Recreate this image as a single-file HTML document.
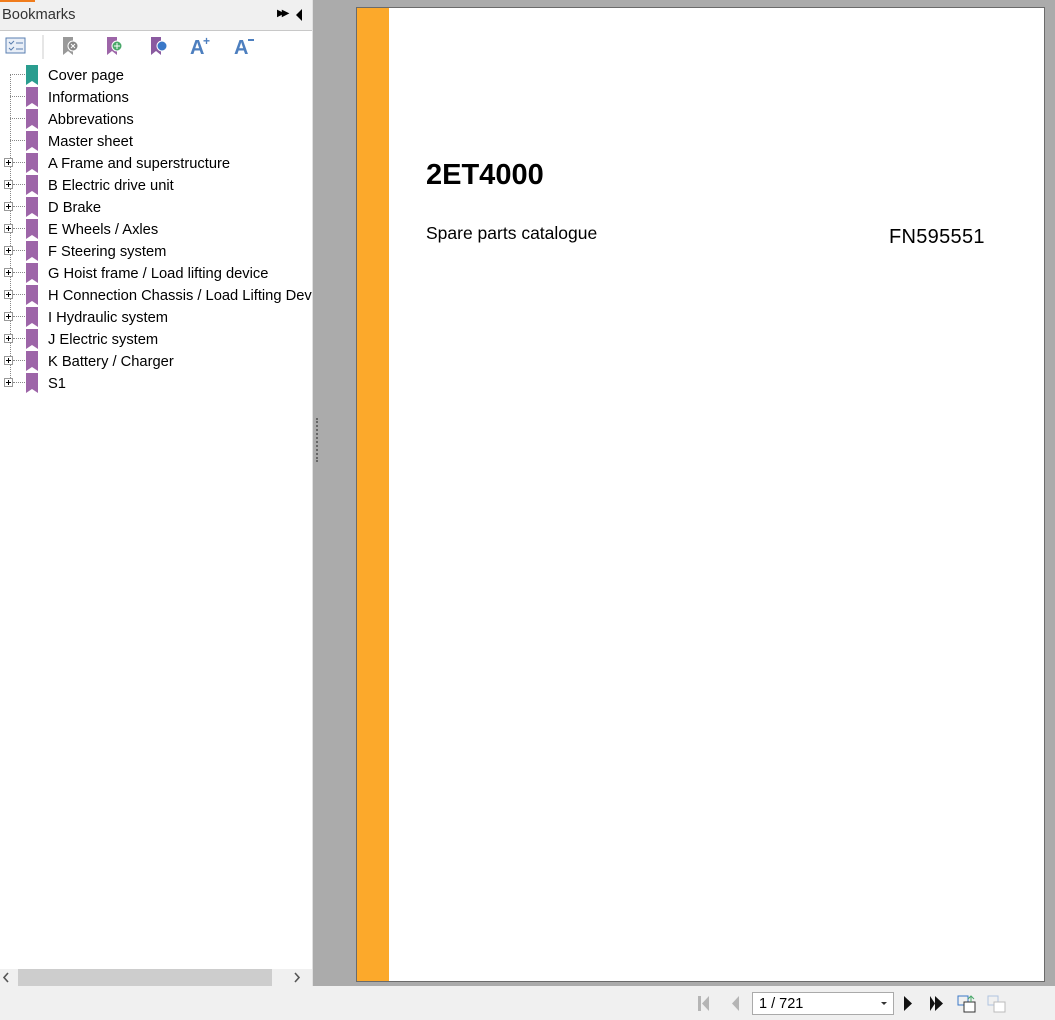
<!DOCTYPE html>
<html><head><meta charset="utf-8"><style>
*{margin:0;padding:0;box-sizing:border-box}
body{width:1055px;height:1020px;background:#f0f0f0;position:relative;overflow:hidden;font-family:"Liberation Sans",Tahoma,sans-serif;}
.abs{position:absolute}
#left{left:0;top:0;width:312px;height:986px;background:#fff}
#hdr{left:0;top:0;width:312px;height:31px;background:#f0f0f0;border-bottom:1px solid #c8c8c8}
#gray{left:313px;top:0;width:742px;height:986px;background:#ababab}
#page{left:356px;top:7px;width:689px;height:975px;background:#fff;border:1px solid #6b6b6b}
.row{position:absolute;left:0;height:22px;width:312px;font-size:14.7px;color:#000;line-height:22px}
.row span{position:absolute;left:48px;top:1px;white-space:nowrap}
.bm{position:absolute;left:26px;top:1px;width:12px;height:20px}
.plus{position:absolute;left:4px;top:6px;width:9px;height:9px;border:1px solid #999;background:#fff}
.plus:before{content:"";position:absolute;left:1px;top:3px;width:5px;height:1px;background:#000}
.plus:after{content:"";position:absolute;left:3px;top:1px;width:1px;height:5px;background:#000}
.dh{position:absolute;left:13px;top:10px;width:12px;border-top:1px dotted #888}
.dh0{left:10px;width:15px}
</style></head><body>
<div class="abs" id="left"></div>
<div class="abs" id="hdr"></div>
<div class="abs" style="left:0;top:0;width:35px;height:2px;background:#f07c1c"></div>
<div class="abs" style="left:2px;top:7px;font-size:14.7px;color:#333">Bookmarks</div>
<div class="abs" style="left:277px;top:8px;font-size:10px;color:#000;letter-spacing:-3px">▶▶</div>
<div class="abs" style="left:296px;top:9px;width:0;height:0;border-top:6px solid transparent;border-bottom:6px solid transparent;border-right:6px solid #000"></div>
<!-- toolbar -->
<svg class="abs" style="left:0;top:33px" width="270" height="28">
<rect x="6" y="5" width="19" height="15" fill="#e8eef7" stroke="#5a7fb0"/>
<path d="M9 9l2 2 3-3M9 15l2 2 3-3" stroke="#5a7fb0" fill="none"/><path d="M16 10h7M16 16h7" stroke="#5a7fb0"/>
<line x1="43" y1="2" x2="43" y2="26" stroke="#ccc"/>
<path d="M63 4h10v18l-5-4-5 4z" fill="#999"/><circle cx="73" cy="13" r="5" fill="#888" stroke="#fff"/><path d="M71 11l4 4M75 11l-4 4" stroke="#fff"/>
<path d="M107 4h10v18l-5-4-5 4z" fill="#9d65a8"/><circle cx="117" cy="13" r="5" fill="#4aa86a" stroke="#fff"/><path d="M114 13h6M117 10v6" stroke="#fff"/>
<path d="M151 4h10v18l-5-4-5 4z" fill="#8a5aa0"/><circle cx="162" cy="13" r="5" fill="#3a78c8" stroke="#fff"/>
<text x="190" y="21" font-size="20" font-weight="bold" fill="#4d7fbf" font-family="Liberation Sans">A</text><text x="203" y="12" font-size="12" font-weight="bold" fill="#4d7fbf">+</text>
<text x="234" y="21" font-size="20" font-weight="bold" fill="#4d7fbf" font-family="Liberation Sans">A</text><rect x="248" y="6" width="6" height="2" fill="#4d7fbf"/>
</svg>
<div class="abs" style="left:10px;top:74px;height:310px;border-left:1px dotted #888"></div>
<div class="row" style="top:64px"><div class="dh dh0"></div><svg class="bm" viewBox="0 0 12 20"><path d="M0 0h12v20l-6-4-6 4z" fill="#2a9d8f"/></svg><span>Cover page</span></div>
<div class="row" style="top:86px"><div class="dh dh0"></div><svg class="bm" viewBox="0 0 12 20"><path d="M0 0h12v20l-6-4-6 4z" fill="#9d65a8"/></svg><span>Informations</span></div>
<div class="row" style="top:108px"><div class="dh dh0"></div><svg class="bm" viewBox="0 0 12 20"><path d="M0 0h12v20l-6-4-6 4z" fill="#9d65a8"/></svg><span>Abbrevations</span></div>
<div class="row" style="top:130px"><div class="dh dh0"></div><svg class="bm" viewBox="0 0 12 20"><path d="M0 0h12v20l-6-4-6 4z" fill="#9d65a8"/></svg><span>Master sheet</span></div>
<div class="row" style="top:152px"><div class="plus"></div><div class="dh"></div><svg class="bm" viewBox="0 0 12 20"><path d="M0 0h12v20l-6-4-6 4z" fill="#9d65a8"/></svg><span>A Frame and superstructure</span></div>
<div class="row" style="top:174px"><div class="plus"></div><div class="dh"></div><svg class="bm" viewBox="0 0 12 20"><path d="M0 0h12v20l-6-4-6 4z" fill="#9d65a8"/></svg><span>B Electric drive unit</span></div>
<div class="row" style="top:196px"><div class="plus"></div><div class="dh"></div><svg class="bm" viewBox="0 0 12 20"><path d="M0 0h12v20l-6-4-6 4z" fill="#9d65a8"/></svg><span>D Brake</span></div>
<div class="row" style="top:218px"><div class="plus"></div><div class="dh"></div><svg class="bm" viewBox="0 0 12 20"><path d="M0 0h12v20l-6-4-6 4z" fill="#9d65a8"/></svg><span>E Wheels / Axles</span></div>
<div class="row" style="top:240px"><div class="plus"></div><div class="dh"></div><svg class="bm" viewBox="0 0 12 20"><path d="M0 0h12v20l-6-4-6 4z" fill="#9d65a8"/></svg><span>F Steering system</span></div>
<div class="row" style="top:262px"><div class="plus"></div><div class="dh"></div><svg class="bm" viewBox="0 0 12 20"><path d="M0 0h12v20l-6-4-6 4z" fill="#9d65a8"/></svg><span>G Hoist frame / Load lifting device</span></div>
<div class="row" style="top:284px;overflow:hidden"><div class="plus"></div><div class="dh"></div><svg class="bm" viewBox="0 0 12 20"><path d="M0 0h12v20l-6-4-6 4z" fill="#9d65a8"/></svg><span>H Connection Chassis / Load Lifting Device</span></div>
<div class="row" style="top:306px"><div class="plus"></div><div class="dh"></div><svg class="bm" viewBox="0 0 12 20"><path d="M0 0h12v20l-6-4-6 4z" fill="#9d65a8"/></svg><span>I Hydraulic system</span></div>
<div class="row" style="top:328px"><div class="plus"></div><div class="dh"></div><svg class="bm" viewBox="0 0 12 20"><path d="M0 0h12v20l-6-4-6 4z" fill="#9d65a8"/></svg><span>J Electric system</span></div>
<div class="row" style="top:350px"><div class="plus"></div><div class="dh"></div><svg class="bm" viewBox="0 0 12 20"><path d="M0 0h12v20l-6-4-6 4z" fill="#9d65a8"/></svg><span>K Battery / Charger</span></div>
<div class="row" style="top:372px"><div class="plus"></div><div class="dh"></div><svg class="bm" viewBox="0 0 12 20"><path d="M0 0h12v20l-6-4-6 4z" fill="#9d65a8"/></svg><span>S1</span></div>
<div class="abs" style="left:0;top:969px;width:312px;height:17px;background:#f0f0f0"></div>
<div class="abs" style="left:18px;top:969px;width:254px;height:17px;background:#cdcdcd"></div>
<svg class="abs" style="left:0;top:969px" width="312" height="17"><path d="M8 4l-4 4.5 4 4.5M295 4l4 4.5-4 4.5" stroke="#555" stroke-width="1.6" fill="none"/></svg>
<div class="abs" style="left:312px;top:0;width:1px;height:986px;background:#e0e0e0"></div>
<div class="abs" id="gray"></div>
<div class="abs" style="left:316px;top:418px;height:44px;border-left:2px dotted #666"></div>
<div class="abs" id="page">
<div class="abs" style="left:0;top:0;width:32px;height:973px;background:#fca92b"></div>
<div class="abs" style="left:69px;top:151px;font-size:29px;font-weight:bold">2ET4000</div>
<div class="abs" style="left:69px;top:215px;font-size:17.5px">Spare parts catalogue</div>
<div class="abs" style="left:532px;top:218px;font-size:20px;letter-spacing:0.3px">FN595551</div>
</div>
<svg class="abs" style="left:690px;top:990px" width="330" height="28">
<rect x="8" y="6" width="3" height="15" fill="#b5b5b5"/><path d="M19 6v15l-7-7.5z" fill="#b5b5b5"/>
<path d="M49 6v15l-7-7.5z" fill="#b5b5b5"/>
<path d="M214 6v15l8-7.5z" fill="#111"/>
<path d="M240 6v15l5-7.5z" fill="#111"/><path d="M245 6v15l8-7.5z" fill="#111"/>
<rect x="268" y="6" width="10" height="9" fill="none" stroke="#3a78c8"/><rect x="274" y="12" width="11" height="10" fill="#fff" stroke="#333"/><path d="M278 9l3-3 3 3M281 6v6" stroke="#4aa86a" fill="none"/>
<rect x="298" y="6" width="10" height="9" fill="none" stroke="#b0c4e0"/><rect x="304" y="12" width="11" height="10" fill="#fff" stroke="#bbb"/>
</svg>
<div class="abs" style="left:752px;top:992px;width:142px;height:23px;background:#fff;border:1px solid #aaa;font-size:14.5px;line-height:22px;padding-left:6px">1 / 721</div>
<div class="abs" style="left:881px;top:1002px;width:0;height:0;border-left:3px solid transparent;border-right:3px solid transparent;border-top:3px solid #333"></div>
</body></html>
